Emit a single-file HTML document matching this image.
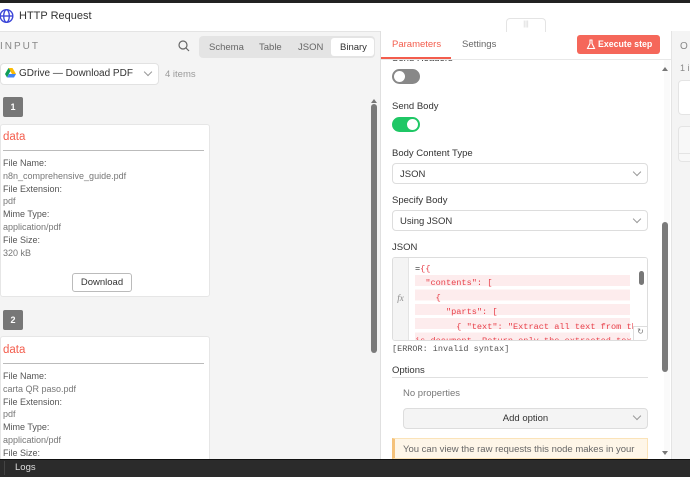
<!DOCTYPE html>
<html><head><meta charset="utf-8"><style>
*{box-sizing:border-box;margin:0;padding:0}
body{width:690px;height:477px;overflow:hidden;position:relative;font-family:"Liberation Sans",sans-serif;font-size:10px;color:#333;background:#fff}
.a{position:absolute}
.lbl{font-size:9px;color:#555;line-height:12.8px}
.sel{position:absolute;left:392px;width:256px;height:21px;border:1px solid #ddd;border-radius:4px;background:#fff;font-size:9.5px;padding:5px 7px;color:#333}
.chev{position:absolute;right:7px;top:5px;width:6px;height:6px;border-right:1px solid #999;border-bottom:1px solid #999;transform:rotate(45deg)}
.mono{font-family:"Liberation Mono",monospace;font-size:8.6px;color:#e8414b;line-height:14.4px;white-space:pre}
</style></head><body>
<div class="a" style="left:0;top:0;width:690px;height:3px;background:#222"></div>
<svg class="a" style="left:0;top:8px" width="15" height="16" viewBox="0 0 15 16"><g fill="none" stroke="#3d47d8" stroke-width="1.4"><circle cx="6.5" cy="8" r="6.3"/><ellipse cx="6.5" cy="8" rx="2.8" ry="6.3"/><line x1="0.5" y1="8" x2="12.8" y2="8"/></g></svg>
<div class="a" style="left:19px;top:10px;font-size:11px;color:#333">HTTP Request</div>
<div class="a" style="left:0;top:31px;width:380px;height:428px;background:#f4f4f4;border-top:1px solid #e4e4e4"></div>
<div class="a" style="left:0;top:41px;font-size:10px;letter-spacing:2px;color:#888">INPUT</div>
<svg class="a" style="left:178px;top:40px" width="12" height="12"><circle cx="5" cy="5" r="4" fill="none" stroke="#666" stroke-width="1.2"/><line x1="8" y1="8" x2="11" y2="11" stroke="#666" stroke-width="1.2"/></svg>
<div class="a" style="left:199px;top:36px;width:176px;height:22px;background:#e4e4e4;border-radius:4px"></div>
<div class="a" style="left:209px;top:42px;color:#666;font-size:9.5px">Schema</div>
<div class="a" style="left:259px;top:42px;color:#666;font-size:9.5px">Table</div>
<div class="a" style="left:298px;top:42px;color:#666;font-size:9.5px">JSON</div>
<div class="a" style="left:331px;top:38px;width:43px;height:18px;background:#fff;border-radius:3px;font-size:9.5px;padding:4px 0 0 9px;color:#333">Binary</div>
<div class="a" style="left:0;top:63px;width:159px;height:22px;background:#fff;border:1px solid #e2e2e2;border-radius:4px"></div>
<svg class="a" style="left:5px;top:68px" width="11" height="10" viewBox="0 0 11 10"><path d="M3.5 0h4L11 6H7z" fill="#fbbc04"/><path d="M3.5 0L0 6l2 3.5L5.5 3z" fill="#0f9d58"/><path d="M2 9.5h7L11 6H4z" fill="#4285f4"/></svg>
<div class="a" style="left:19px;top:68px;font-size:10px;color:#333">GDrive — Download PDF</div>
<div class="chev" style="left:145px;top:69px;right:auto"></div>
<div class="a" style="left:165px;top:69px;color:#999;font-size:9.5px">4 items</div>
<div class="a" style="left:3px;top:97px;width:20px;height:20px;background:#777;border-radius:2px;color:#fff;font-size:9px;font-weight:bold;text-align:center;line-height:20px">1</div>
<div class="a" style="left:0;top:124px;width:210px;height:173px;background:#fff;border:1px solid #e6e6e6;border-radius:3px"></div>
<div class="a" style="left:3px;top:131px;color:#f35d4d;font-size:11.5px">data</div>
<div class="a" style="left:3px;top:150px;width:201px;height:1px;background:#bbb"></div>
<div class="a lbl" style="left:3px;top:157px">File Name:<br><span style="color:#777">n8n_comprehensive_guide.pdf</span><br>File Extension:<br><span style="color:#777">pdf</span><br>Mime Type:<br><span style="color:#777">application/pdf</span><br>File Size:<br><span style="color:#777">320 kB</span></div>
<div class="a" style="left:72px;top:273px;width:60px;height:19px;border:1px solid #bbb;border-radius:3px;background:#fff;font-size:9.5px;text-align:center;line-height:17px">Download</div>
<div class="a" style="left:3px;top:310px;width:20px;height:20px;background:#777;border-radius:2px;color:#fff;font-size:9px;font-weight:bold;text-align:center;line-height:20px">2</div>
<div class="a" style="left:0;top:336px;width:210px;height:130px;background:#fff;border:1px solid #e6e6e6;border-radius:3px"></div>
<div class="a" style="left:3px;top:344px;color:#f35d4d;font-size:11.5px">data</div>
<div class="a" style="left:3px;top:363px;width:201px;height:1px;background:#bbb"></div>
<div class="a lbl" style="left:3px;top:370px">File Name:<br><span style="color:#777">carta QR paso.pdf</span><br>File Extension:<br><span style="color:#777">pdf</span><br>Mime Type:<br><span style="color:#777">application/pdf</span><br>File Size:</div>
<div class="a" style="left:370px;top:92px;width:8px;height:365px;background:#f4f4f4"></div>
<div class="a" style="left:371px;top:104px;width:6px;height:249px;background:#7a7a7a;border-radius:3px"></div>
<div class="a" style="left:371px;top:96px;width:0;height:0;border:3px solid transparent;border-bottom:4px solid #777"></div>
<div class="a" style="left:380px;top:31px;width:290px;height:428px;background:#fff;border-left:1px solid #e0e0e0"></div>
<div class="a" style="left:506px;top:18px;width:40px;height:14px;background:#fff;border:1px solid #e4e4e4;border-bottom:none;border-radius:4px 4px 0 0;color:#ccc;font-size:7px;text-align:center;line-height:12px">|||</div>
<div class="a" style="left:392px;top:39px;color:#f35d4d;font-size:9.5px">Parameters</div>
<div class="a" style="left:381px;top:57px;width:70px;height:2px;background:#f35d4d"></div>
<div class="a" style="left:462px;top:39px;color:#666;font-size:9.5px">Settings</div>
<div class="a" style="left:381px;top:59px;width:290px;height:1px;background:#e8e8e8"></div>
<div class="a" style="left:577px;top:35px;width:83px;height:19px;background:#f5675a;border-radius:3px;color:#fff;font-size:8.8px;font-weight:bold;line-height:19px;padding-left:21px">Execute step</div>
<svg class="a" style="left:586px;top:39px" width="10" height="11"><path d="M3.5 1h3M4 1v3.5L1.5 9.5h7L6 4.5V1" fill="none" stroke="#fff" stroke-width="1.1"/></svg>
<div class="a" style="left:392px;top:60px;width:80px;height:4px;overflow:hidden"><div style="margin-top:-7px;font-size:9.5px">Send Headers</div></div>
<div class="a" style="left:392px;top:69px;width:28px;height:15px;background:#888;border-radius:8px"></div>
<div class="a" style="left:394px;top:71px;width:11px;height:11px;background:#fff;border-radius:50%"></div>
<div class="a" style="left:392px;top:101px;font-size:9.5px">Send Body</div>
<div class="a" style="left:392px;top:117px;width:28px;height:15px;background:#1fc765;border-radius:8px"></div>
<div class="a" style="left:407px;top:119px;width:11px;height:11px;background:#fff;border-radius:50%"></div>
<div class="a" style="left:392px;top:148px;font-size:9.5px">Body Content Type</div>
<div class="sel" style="top:163px">JSON<div class="chev"></div></div>
<div class="a" style="left:392px;top:195px;font-size:9.5px">Specify Body</div>
<div class="sel" style="top:210px">Using JSON<div class="chev"></div></div>
<div class="a" style="left:392px;top:242px;font-size:9.5px">JSON</div>
<div class="a" style="left:392px;top:257px;width:256px;height:84px;border:1px solid #ddd;border-radius:3px;background:#fff;overflow:hidden">
 <div style="position:absolute;left:0;top:0;width:16px;height:84px;background:#f4f4f4;border-right:1px solid #e4e4e4;color:#888;font-family:'Liberation Serif',serif;font-style:italic;font-size:9px;padding-top:35px;text-align:center">fx</div>
 <div style="position:absolute;left:22px;top:17px;width:215px;height:70px;background:repeating-linear-gradient(#fdeced 0 11px,#fff 11px 14.4px)"></div>
 <div class="mono" style="position:absolute;left:22px;top:4px"><span style="color:#333">=</span>{{
  "contents": [
    {
      "parts": [
        { "text": "Extract all text from th
is document. Return only the extracted tex</div>
 <div style="position:absolute;right:0;top:0;width:14px;height:84px;background:#fff"></div>
 <div style="position:absolute;right:3px;top:13px;width:5px;height:14px;background:#777;border-radius:3px"></div>
 <div style="position:absolute;right:0;bottom:0;width:14px;height:14px;border-left:1px solid #ddd;border-top:1px solid #ddd;font-size:8px;color:#777;text-align:center">↻</div>
</div>
<div class="a" style="left:392px;top:344px;font-family:'Liberation Mono',monospace;font-size:8.5px;color:#555">[ERROR: invalid syntax]</div>
<div class="a" style="left:392px;top:365px;font-size:9.5px;color:#333">Options</div>
<div class="a" style="left:392px;top:377px;width:256px;height:1px;background:#e0e0e0"></div>
<div class="a" style="left:403px;top:388px;font-size:9.5px;color:#777">No properties</div>
<div class="a" style="left:403px;top:408px;width:245px;height:21px;background:#f4f4f4;border:1px solid #ddd;border-radius:4px;font-size:9.5px;text-align:center;line-height:19px">Add option<div class="chev" style="top:4px"></div></div>
<div class="a" style="left:392px;top:438px;width:256px;height:21px;background:#fef6e8;border:1px solid #fbe3b8;border-left:3px solid #f5c27a;overflow:hidden;font-size:9.5px;color:#666;padding:4px 8px;line-height:13px">You can view the raw requests this node makes in your browser's developer console</div>
<div class="a" style="left:664px;top:60px;width:6px;height:400px;background:#fafafa"></div>
<div class="a" style="left:662px;top:222px;width:6px;height:150px;background:#7a7a7a;border-radius:3px"></div>
<div class="a" style="left:662px;top:64px;border:3px solid transparent;border-bottom:4px solid #777"></div>
<div class="a" style="left:662px;top:451px;border:3px solid transparent;border-top:4px solid #777"></div>
<div class="a" style="left:671px;top:31px;width:19px;height:428px;background:#f4f4f4;border-left:1px solid #e4e4e4"></div>
<div class="a" style="left:680px;top:41px;color:#888;font-size:10px;letter-spacing:2px">O</div>
<div class="a" style="left:680px;top:63px;color:#888;font-size:9px">1 i</div>
<div class="a" style="left:678px;top:80px;width:20px;height:35px;background:#fff;border:1px solid #e4e4e4;border-radius:4px"></div>
<div class="a" style="left:678px;top:126px;width:20px;height:36px;background:#f8f8f8;border:1px solid #e4e4e4;border-radius:4px"></div>
<div class="a" style="left:678px;top:153px;width:20px;height:1px;background:#e4e4e4"></div>
<div class="a" style="left:0;top:459px;width:690px;height:18px;background:#2b2b2b;border-top:1px solid #111"></div>
<div class="a" style="left:4px;top:461px;width:1px;height:14px;background:#444"></div>
<div class="a" style="left:15px;top:462px;color:#ddd;font-size:9.5px">Logs</div>
</body></html>
